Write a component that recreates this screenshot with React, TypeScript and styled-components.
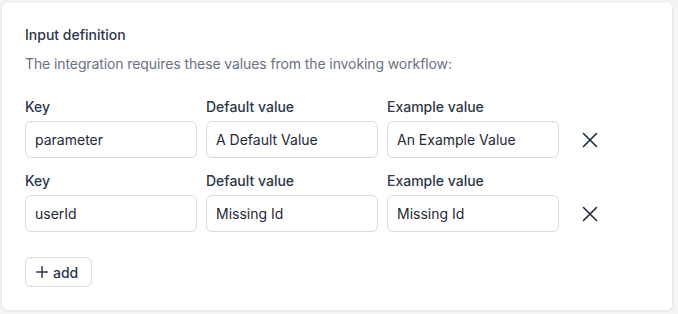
import styled, { createGlobalStyle } from 'styled-components';

const GlobalStyle = createGlobalStyle`
  html, body {
    margin: 0;
    padding: 0;
    background: #f3f4f6;
  }
  body {
    font-family: Inter, "Noto Sans", sans-serif;
    -webkit-font-smoothing: antialiased;
  }
  #root {
    padding: 1px;
  }
`;

interface InputRow {
  key: string;
  defaultValue: string;
  exampleValue: string;
}

const rows: InputRow[] = [
  { key: 'parameter', defaultValue: 'A Default Value', exampleValue: 'An Example Value' },
  { key: 'userId', defaultValue: 'Missing Id', exampleValue: 'Missing Id' },
];

const Card = styled.section`
  box-sizing: border-box;
  width: 672px;
  height: 310px;
  background: #ffffff;
  border: 1px solid #e7e8eb;
  border-radius: 7px;
  box-shadow: 0 1px 2px rgba(17, 24, 39, 0.04);
  padding: 23px 23px;
  display: flex;
  flex-direction: column;
`;

const Title = styled.h3`
  margin: 0;
  font-size: 14px;
  line-height: 20px;
  font-weight: 500;
  color: #2d3748;
`;

const Description = styled.p`
  margin: 9px 0 0;
  font-size: 14px;
  line-height: 20px;
  font-weight: 400;
  letter-spacing: -0.1px;
  color: #6b7280;
`;

const Rows = styled.div`
  margin-top: 23px;
  display: flex;
  flex-direction: column;
  gap: 13px;
`;

const Row = styled.div`
  display: grid;
  grid-template-columns: 172px 172px 172px 32px;
  column-gap: 9px;
  row-gap: 4px;
  align-items: center;
`;

const Label = styled.label`
  font-size: 14px;
  line-height: 20px;
  font-weight: 500;
  color: #2d3748;
`;

const TextInput = styled.input`
  box-sizing: border-box;
  width: 100%;
  height: 37px;
  padding: 0 9px;
  border: 1px solid #d9dbe0;
  border-radius: 6px;
  background: #ffffff;
  font-family: inherit;
  font-size: 14px;
  color: #1f2937;
  outline: none;
`;

const RemoveButton = styled.button`
  width: 32px;
  height: 32px;
  margin-left: 6px;
  padding: 0;
  border: none;
  background: transparent;
  display: flex;
  align-items: center;
  justify-content: center;
  color: #1f2937;
  cursor: pointer;
`;

const AddButton = styled.button`
  box-sizing: border-box;
  margin-top: 25px;
  align-self: flex-start;
  height: 30px;
  width: 67px;
  padding: 0 10px;
  display: flex;
  align-items: center;
  gap: 5px;
  border: 1px solid #d9dbe0;
  border-radius: 6px;
  background: #ffffff;
  font-family: inherit;
  font-size: 14px;
  font-weight: 500;
  color: #2d3748;
  cursor: pointer;
`;

const CrossIcon = () => (
  <svg width="16" height="16" viewBox="0 0 16 16" fill="none" stroke="currentColor" strokeWidth="1.6" strokeLinecap="round">
    <path d="M1.5 1.5l13 13M14.5 1.5l-13 13" />
  </svg>
);

const PlusIcon = () => (
  <svg width="12" height="12" viewBox="0 0 12 12" fill="none" stroke="currentColor" strokeWidth="1.5" strokeLinecap="round">
    <path d="M6 0.75v10.5M0.75 6h10.5" />
  </svg>
);

export default function App() {
  return (
    <>
      <GlobalStyle />
      <Card>
        <Title>Input definition</Title>
        <Description>The integration requires these values from the invoking workflow:</Description>
        <Rows>
          {rows.map((row) => (
            <Row key={row.key}>
              <Label>Key</Label>
              <Label>Default value</Label>
              <Label>Example value</Label>
              <span />
              <TextInput defaultValue={row.key} aria-label="Key" />
              <TextInput defaultValue={row.defaultValue} aria-label="Default value" />
              <TextInput defaultValue={row.exampleValue} aria-label="Example value" />
              <RemoveButton aria-label="remove input">
                <CrossIcon />
              </RemoveButton>
            </Row>
          ))}
        </Rows>
        <AddButton>
          <PlusIcon />
          add
        </AddButton>
      </Card>
    </>
  );
}
